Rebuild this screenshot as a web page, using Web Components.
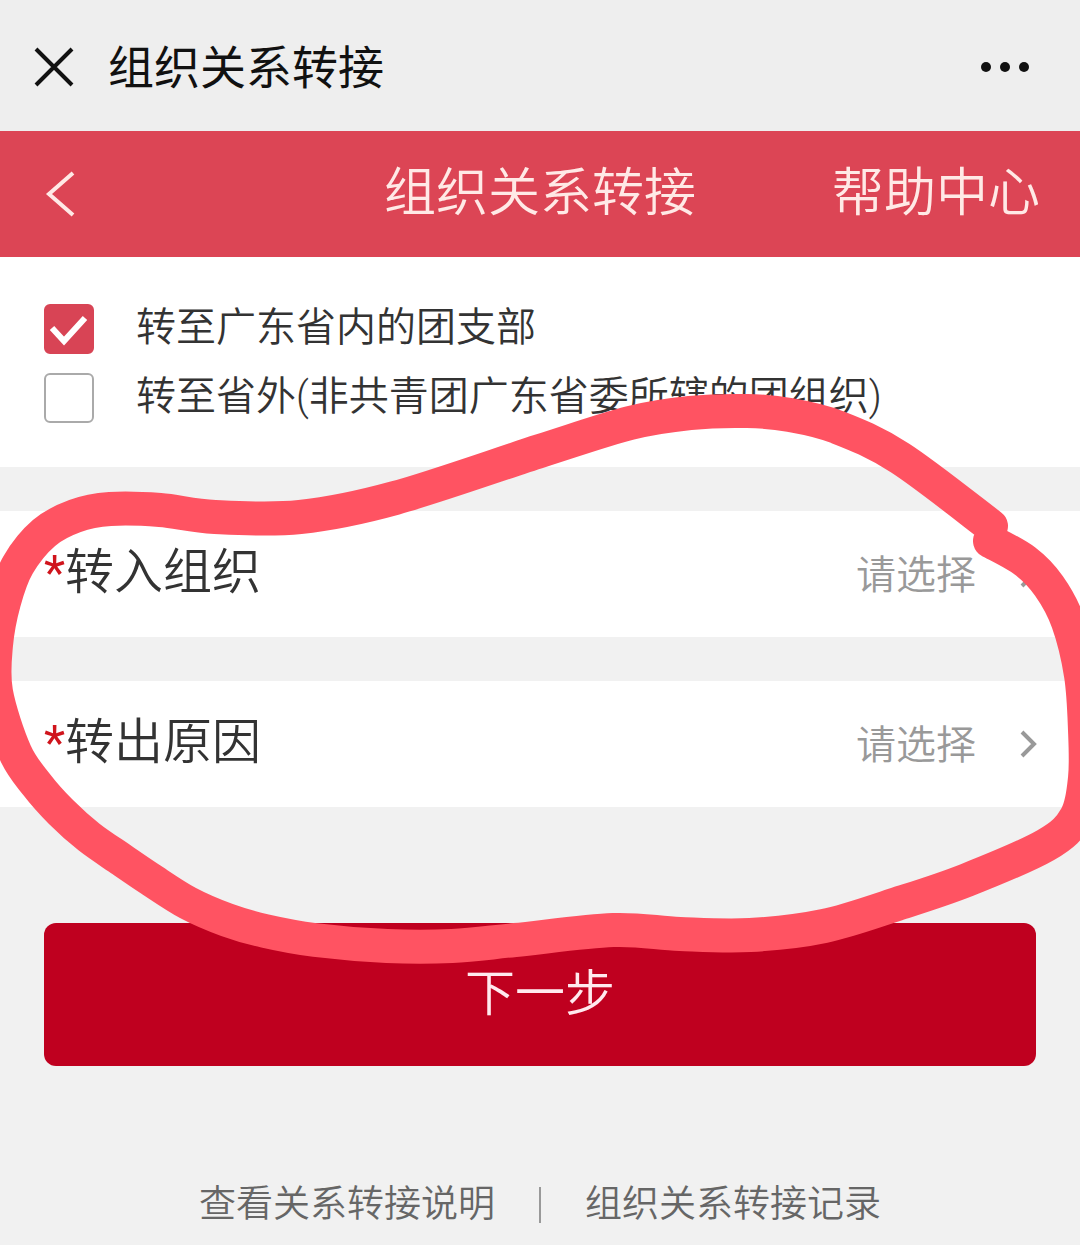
<!DOCTYPE html>
<html lang="zh-CN">
<head>
<meta charset="UTF-8">
<meta name="viewport" content="width=device-width, initial-scale=1">
<title>组织关系转接</title>
<style>
  body {
    margin: 0;
    min-height: 100vh;
    background: #f1f1f1;
    color: #333;
    font-family: Roboto, "Noto Sans CJK SC", sans-serif;
    font-weight: 350;
  }
</style>
</head>
<body>
<transfer-page>
  <browser-bar slot="top">组织关系转接</browser-bar>
  <app-header slot="top">组织关系转接<span slot="action">帮助中心</span></app-header>
  <choice-group>
    <check-item checked>转至广东省内的团支部</check-item>
    <check-item>转至省外(非共青团广东省委所辖的团组织)</check-item>
  </choice-group>
  <picker-row label="转入组织" placeholder="请选择"></picker-row>
  <picker-row label="转出原因" placeholder="请选择"></picker-row>
  <submit-button slot="bottom">下一步</submit-button>
  <footer-links slot="bottom">
    <a slot="first" href="#guide">查看关系转接说明</a>
    <a slot="second" href="#records">组织关系转接记录</a>
  </footer-links>
  <marker-stroke slot="overlay"></marker-stroke>
</transfer-page>

<script>
class TransferPage extends HTMLElement {
  constructor() {
    super();
    this.attachShadow({ mode: 'open' });
    this.shadowRoot.innerHTML = `
      <style>
        :host {
          display: block;
          position: relative;
          overflow: hidden;
        }
        main {
          display: flex;
          flex-direction: column;
          gap: 44px;
        }
      </style>
      <slot name="top"></slot>
      <main><slot></slot></main>
      <slot name="bottom"></slot>
      <slot name="overlay"></slot>
    `;
  }
}

class BrowserBar extends HTMLElement {
  constructor() {
    super();
    this.attachShadow({ mode: 'open' });
    this.shadowRoot.innerHTML = `
      <style>
        :host {
          display: flex;
          align-items: center;
          height: 131px;
          padding: 0 48px 0 32px;
          background: #eee;
          color: #111;
        }
        button {
          display: flex;
          padding: 0;
          border: none;
          background: none;
          color: inherit;
        }
        h1 {
          flex: 1;
          margin: 0 0 0 32px;
          padding-top: 4px;
          font-size: 46px;
          font-weight: 400;
          line-height: 64px;
        }
      </style>
      <button aria-label="关闭">
        <svg width="44" height="44" viewBox="0 0 44 44" fill="none" stroke="currentColor" stroke-width="4">
          <path d="M4 5L40 41M40 5L4 41"/>
        </svg>
      </button>
      <h1><slot></slot></h1>
      <button aria-label="更多">
        <svg width="52" height="12" viewBox="0 0 52 12" fill="currentColor">
          <circle cx="6" cy="7" r="5"/>
          <circle cx="25" cy="7" r="5"/>
          <circle cx="44" cy="7" r="5"/>
        </svg>
      </button>
    `;
  }
}

class AppHeader extends HTMLElement {
  constructor() {
    super();
    this.attachShadow({ mode: 'open' });
    this.shadowRoot.innerHTML = `
      <style>
        :host {
          display: grid;
          grid-template-columns: 1fr auto 1fr;
          align-items: center;
          height: 126px;
          padding: 0 40px;
          background: #dc4555;
          color: #ffe9e6;
          font-size: 52px;
          line-height: 72px;
        }
        button {
          display: flex;
          justify-self: start;
          padding: 0;
          border: none;
          background: none;
          color: inherit;
        }
        h2 {
          margin: 0;
          font: inherit;
        }
        a {
          justify-self: end;
          color: inherit;
          text-decoration: none;
        }
      </style>
      <button aria-label="返回">
        <svg width="40" height="48" viewBox="0 0 40 48" fill="none" stroke="currentColor" stroke-width="4">
          <path d="M33 3L9 24L33 45"/>
        </svg>
      </button>
      <h2><slot></slot></h2>
      <a href="#help"><slot name="action"></slot></a>
    `;
  }
}

class ChoiceGroup extends HTMLElement {
  constructor() {
    super();
    this.attachShadow({ mode: 'open' });
    this.shadowRoot.innerHTML = `
      <style>
        :host {
          display: flex;
          flex-direction: column;
          gap: 19px;
          padding: 47px 44px 44px;
          background: #fff;
        }
      </style>
      <slot></slot>
    `;
  }
}

class CheckItem extends HTMLElement {
  constructor() {
    super();
    this.attachShadow({ mode: 'open' });
    this.shadowRoot.innerHTML = `
      <style>
        :host {
          display: block;
        }
        label {
          display: grid;
          grid-template-columns: 50px 1fr;
          column-gap: 42px;
          height: 50px;
          font-size: 40px;
          line-height: 48px;
          white-space: nowrap;
        }
        input, svg {
          grid-area: 1 / 1;
          width: 50px;
          height: 50px;
        }
        input {
          appearance: none;
          box-sizing: border-box;
          margin: 0;
          border: 2px solid #aaa;
          border-radius: 6px;
          background: #fff;
        }
        input:checked {
          border-color: #d84455;
          background: #d84455;
        }
        svg {
          visibility: hidden;
          pointer-events: none;
        }
        input:checked + svg {
          visibility: visible;
        }
      </style>
      <label>
        <input type="checkbox" ${this.hasAttribute('checked') ? 'checked' : ''}>
        <svg viewBox="0 0 50 50" fill="none" stroke="#fff" stroke-width="6">
          <path d="M8 24L20 37L41 14"/>
        </svg>
        <span><slot></slot></span>
      </label>
    `;
  }
}

class PickerRow extends HTMLElement {
  constructor() {
    super();
    this.attachShadow({ mode: 'open' });
    this.shadowRoot.innerHTML = `
      <style>
        :host {
          display: flex;
          align-items: center;
          height: 126px;
          padding: 0 40px 0 44px;
          background: #fff;
        }
        label {
          flex: 1;
          font-size: 49px;
          line-height: 72px;
          padding-bottom: 2px;
        }
        .required {
          color: #d0141c;
          font-weight: 400;
        }
        select {
          appearance: none;
          margin: 0 40px 0 0;
          padding: 4px 0 0;
          border: none;
          background: none;
          color: #999;
          font: inherit;
          font-size: 40px;
          line-height: 60px;
        }
      </style>
      <label for="picker"><span class="required">*</span>${this.getAttribute('label')}</label>
      <select id="picker">
        <option>${this.getAttribute('placeholder')}</option>
      </select>
      <svg width="24" height="32" viewBox="0 0 24 32" fill="none" stroke="#999" stroke-width="4">
        <path d="M6 4L18 16L6 28"/>
      </svg>
    `;
  }
}

class SubmitButton extends HTMLElement {
  constructor() {
    super();
    this.attachShadow({ mode: 'open' });
    this.shadowRoot.innerHTML = `
      <style>
        :host {
          display: block;
          padding: 116px 44px 0;
        }
        button {
          width: 100%;
          height: 143px;
          padding: 0 0 12px;
          border: none;
          border-radius: 12px;
          background: #bf001f;
          color: #ffe9ee;
          font: inherit;
          font-size: 50px;
        }
      </style>
      <button type="button"><slot></slot></button>
    `;
  }
}

class FooterLinks extends HTMLElement {
  constructor() {
    super();
    this.attachShadow({ mode: 'open' });
    this.shadowRoot.innerHTML = `
      <style>
        :host {
          display: flex;
          justify-content: center;
          align-items: center;
          gap: 44px;
          padding: 111px 0 12px;
          color: #666;
          font-size: 37px;
          line-height: 56px;
        }
        ::slotted(a) {
          color: inherit;
          text-decoration: none;
        }
        i {
          width: 2px;
          height: 36px;
          background: #999;
        }
      </style>
      <slot name="first"></slot>
      <i></i>
      <slot name="second"></slot>
    `;
  }
}

// Hand-drawn loop around the two required fields
const STROKE_POINTS = [
  [990, 541], [1025, 561], [1049, 586], [1068, 622], [1081, 675], [1085, 730],
  [1085, 778], [1076, 817], [1046, 845], [967, 880], [897, 904], [824, 926],
  [750, 935], [680, 934], [613, 930], [515, 940], [452, 946], [387, 946],
  [315, 940], [265, 931], [227, 920], [188, 903], [150, 879], [122, 860],
  [89, 837], [61, 812], [37, 785], [15, 752], [-4, 692], [-4, 645], [4, 602],
  [18, 565], [44, 533], [75, 516], [110, 509], [160, 510], [215, 517],
  [300, 517], [395, 498], [540, 451], [630, 423], [690, 413], [747, 411],
  [790, 415], [837, 427], [900, 458], [991, 526]
];

class MarkerStroke extends HTMLElement {
  constructor() {
    super();
    this.attachShadow({ mode: 'open' });
    this.shadowRoot.innerHTML = `
      <style>
        :host {
          display: block;
          position: absolute;
          top: 0;
          left: 0;
          width: 100%;
          pointer-events: none;
        }
        svg {
          display: block;
          width: 100%;
        }
      </style>
      <svg viewBox="0 0 1080 1000" fill="none" stroke="#ff5362" stroke-width="34" stroke-linecap="round" stroke-linejoin="round">
        <path d="${this.smooth(STROKE_POINTS)}"/>
      </svg>
    `;
  }

  // Catmull-Rom through the points, as cubic segments
  smooth(pts) {
    let d = `M${pts[0].join(' ')}`;
    for (let i = 0; i < pts.length - 1; i++) {
      const p0 = pts[i - 1] || pts[i];
      const p1 = pts[i];
      const p2 = pts[i + 1];
      const p3 = pts[i + 2] || p2;
      const c1 = [p1[0] + (p2[0] - p0[0]) / 6, p1[1] + (p2[1] - p0[1]) / 6];
      const c2 = [p2[0] - (p3[0] - p1[0]) / 6, p2[1] - (p3[1] - p1[1]) / 6];
      d += `C${c1.join(' ')} ${c2.join(' ')} ${p2.join(' ')}`;
    }
    return d;
  }
}

customElements.define('transfer-page', TransferPage);
customElements.define('browser-bar', BrowserBar);
customElements.define('app-header', AppHeader);
customElements.define('choice-group', ChoiceGroup);
customElements.define('check-item', CheckItem);
customElements.define('picker-row', PickerRow);
customElements.define('submit-button', SubmitButton);
customElements.define('footer-links', FooterLinks);
customElements.define('marker-stroke', MarkerStroke);
</script>
</body>
</html>
